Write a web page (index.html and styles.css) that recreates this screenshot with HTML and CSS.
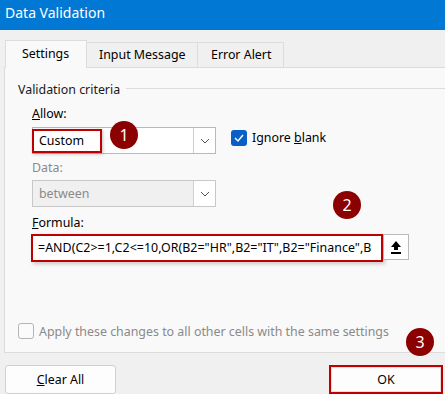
FILE: index.html
```html
<!DOCTYPE html>
<html>
<head>
<meta charset="utf-8">
<link rel="stylesheet" href="styles.css">
</head>
<body>
<div class="titlebar">Data Validation</div>
<div class="tabs">
  <div class="tab active">Settings</div>
  <div class="tab">Input Message</div>
  <div class="tab">Error Alert</div>
</div>
<div class="panel">
  <div class="group-title"><span>Validation criteria</span><div class="rule"></div></div>
  <div class="field">
    <div class="label"><u>A</u>llow:</div>
    <div class="row">
      <div class="select">
        <span class="value hl">Custom</span>
        <span class="arrow"><svg width="10" height="6" viewBox="0 0 10 6"><path d="M1 1 L5 5 L9 1" fill="none" stroke="#555" stroke-width="1"/></svg></span>
        <span class="badge b1">1</span>
      </div>
      <label class="check"><span class="box on"><svg width="12" height="10" viewBox="0 0 12 10"><path d="M2 5 L5 8 L10 2" fill="none" stroke="#fff" stroke-width="1.4"/></svg></span><span>Ignore <u>b</u>lank</span></label>
    </div>
  </div>
  <div class="field">
    <div class="label muted">Data:</div>
    <div class="select disabled">
      <span class="value">between</span>
      <span class="arrow"><svg width="10" height="6" viewBox="0 0 10 6"><path d="M1 1 L5 5 L9 1" fill="none" stroke="#555" stroke-width="1"/></svg></span>
      <span class="badge b2">2</span>
    </div>
  </div>
  <div class="field">
    <div class="label"><u>F</u>ormula:</div>
    <div class="row formula-row">
      <div class="formula">=AND(C2&gt;=1,C2&lt;=10,OR(B2="HR",B2="IT",B2="Finance",B</div>
      <div class="pick"><svg width="12" height="14" viewBox="0 0 12 14"><path d="M6 1 L11 7 L8 7 L8 10 L4 10 L4 7 L1 7 Z" fill="#000"/><rect x="1" y="12" width="10" height="2" fill="#000"/></svg></div>
    </div>
  </div>
  <label class="check apply"><span class="box off"></span><span>Apply these changes to all other cells with the same settings</span></label>
  <span class="badge b3">3</span>
</div>
<div class="footer">
  <button class="btn"><u>C</u>lear All</button>
  <button class="btn ok">OK</button>
</div>
</body>
</html>
```
FILE: styles.css
```css
* { box-sizing: border-box; }
body {
  margin: 0;
  width: 445px;
  height: 394px;
  overflow: hidden;
  background: #f0f0f0;
  font-family: "Noto Sans", "Open Sans", sans-serif;
  font-size: 12.4px;
  color: #000;
}
.titlebar {
  height: 30px;
  background: #0078d4;
  color: #fff;
  font-size: 14px;
  line-height: 25px;
  padding-left: 5px;
}
.tabs {
  display: flex;
  align-items: flex-end;
  margin-top: 10px;
  padding-left: 5px;
  height: 27px;
  position: relative;
  z-index: 2;
  white-space: nowrap;
}
.tab {
  height: 25px;
  line-height: 23px;
  border: 1px solid #dcdcdc;
  border-bottom: none;
  background: #f0f0f0;
  margin-left: -1px;
}
.tab:first-child { margin-left: 0; }
.tab.active {
  height: 28px;
  width: 82px;
  padding-left: 16px;
  background: #f9f9f9;
  line-height: 25px;
  margin-bottom: -1px;
}
.tab:nth-child(2) { width: 112px; padding-left: 12px; }
.tab:nth-child(3) { width: 87px; padding-left: 13px; }
.panel {
  position: relative;
  margin-left: 4px;
  width: 460px;
  height: 286px;
  border: 1px solid #dcdcdc;
  background: #f9f9f9;
  padding: 12px 0 0 13px;
}
.group-title {
  display: flex;
  align-items: center;
  height: 18px;
  color: #1a1a1a;
}
.group-title .rule {
  flex: 1;
  border-top: 1px solid #dcdcdc;
  margin-left: 6px;
  margin-top: -1px;
}
.field { padding-left: 14px; }
.label {
  height: 18px;
  line-height: 18px;
  margin-top: 7px;
}
.label.muted { color: #8a8a8a; margin-top: 5px; }
.row { display: flex; align-items: center; margin-top: 4px; }
.select {
  position: relative;
  width: 184px;
  height: 27px;
  border: 1px solid #b9b9b9;
  background: #fff;
  display: flex;
  align-items: center;
}
.field > .select { margin-top: 3px; }
.select.disabled { background: #f0f0f0; border-color: #c8c8c8; color: #8a8a8a; }
.select .value { padding-left: 6px; }
.select .value.hl {
  margin-left: -1px;
  height: 24px;
  width: 70px;
  border: 2px solid #c00000;
  line-height: 20px;
  padding-left: 5px;
  box-shadow: 1px 1px 3px rgba(0,0,0,0.25);
}
.select .arrow {
  position: absolute;
  right: 0;
  top: 0;
  bottom: 0;
  width: 22px;
  border-left: 1px solid #cfcfcf;
  background: #fff;
  display: flex;
  align-items: center;
  justify-content: center;
}
.check {
  display: flex;
  align-items: center;
  margin-left: 15px;
  margin-top: -6px;
}
.box {
  width: 16px;
  height: 16px;
  border-radius: 3px;
  margin-right: 5px;
  display: flex;
  align-items: center;
  justify-content: center;
  flex: none;
}
.box.on { background: #0a5fc4; }
.box.off { border: 1px solid #b5b5b5; background: #fbfbfb; }
.formula-row { margin-top: 2px; align-items: flex-start; }
.formula {
  width: 352px;
  height: 28px;
  margin-left: -1px;
  border: 2px solid #c00000;
  background: #fff;
  padding-left: 5px;
  line-height: 24px;
  white-space: nowrap;
  overflow: hidden;
  letter-spacing: 0.05px;
  box-shadow: 2px 2px 4px rgba(0,0,0,0.2);
}
.pick {
  width: 26px;
  height: 26px;
  border: 1px solid #b9b9b9;
  background: #fff;
  display: flex;
  align-items: center;
  justify-content: center;
}
.apply {
  margin-left: 0;
  margin-top: 60px;
  height: 18px;
  color: #8a8a8a;
}
.badge {
  position: absolute;
  width: 28px;
  height: 28px;
  border-radius: 50%;
  background: #8b0000;
  color: #fff;
  font-size: 16px;
  line-height: 28px;
  text-align: center;
  z-index: 3;
}
.b1 { left: 77px; top: -7px; }
.b2 { left: 300px; top: 10px; }
.b3 { left: 401px; top: 260px; }
.footer {
  display: flex;
  justify-content: space-between;
  padding: 12px 2px 0 5px;
}
.btn {
  font: inherit;
  height: 29px;
  border: 1px solid #d0d0d0;
  border-radius: 3px;
  background: #fdfdfd;
  color: #000;
}
.btn:first-child { width: 111px; }
.btn.ok {
  width: 114px;
  border: 2px solid #c00000;
  border-radius: 0;
  box-shadow: inset 0 0 0 1px #e0e0e0;
}
```
